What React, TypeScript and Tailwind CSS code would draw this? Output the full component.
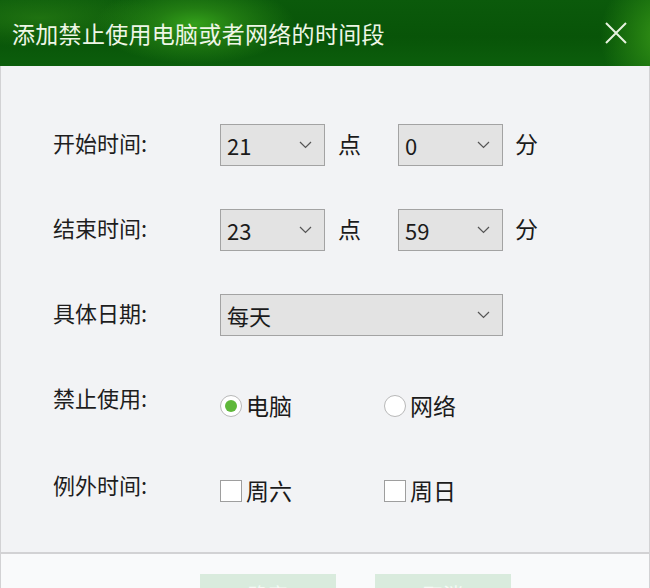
import { ReactNode } from 'react';

const FONT = "font-['Microsoft_YaHei','Noto_Sans_CJK_SC','Noto_Sans',sans-serif]";

function Chevron() {
  return (
    <svg width="13" height="8" viewBox="0 0 13 8" fill="none" className="shrink-0">
      <path d="M1 1l5.5 5.5L12 1" stroke="#555" strokeWidth="1.2" />
    </svg>
  );
}

function Select({ value, width }: { value: string; width: string }) {
  return (
    <div
      className={`flex h-[42px] ${width} items-center justify-between border border-[#a3a3a3] bg-[#e3e3e3] pl-[6px] pr-[12px] text-[22px] text-[#1b1b1b]`}
    >
      <span>{value}</span>
      <Chevron />
    </div>
  );
}

function Row({ label, children, labelClass = 'mb-[6px]' }: { label: string; children: ReactNode; labelClass?: string }) {
  return (
    <div className="flex h-[42px] items-center">
      <div className={`w-[219px] shrink-0 pl-[52px] text-[22px] text-[#1e1e1e] ${labelClass}`}>{label}</div>
      {children}
    </div>
  );
}

function Radio({ checked, label }: { checked?: boolean; label: string }) {
  return (
    <div className="flex items-center gap-[4px]">
      <span className="flex size-[22px] items-center justify-center rounded-full border border-[#b8b8b8] bg-white">
        {checked && <span className="size-[12px] rounded-full bg-[#5fb83a]" />}
      </span>
      <span className="mb-[2px] text-[23px] text-[#1b1b1b]">{label}</span>
    </div>
  );
}

function Checkbox({ label }: { label: string }) {
  return (
    <div className="flex items-center gap-[4px]">
      <span className="size-[22px] border border-[#9e9e9e] bg-white" />
      <span className="mb-[2px] text-[23px] text-[#1b1b1b]">{label}</span>
    </div>
  );
}

export default function App() {
  return (
    <div className={`flex h-[588px] w-[650px] flex-col overflow-hidden ${FONT}`}>
      <div className="flex h-[66px] shrink-0 items-center justify-between bg-[radial-gradient(ellipse_100px_40px_at_195px_24px,rgba(52,160,26,1)_0%,rgba(44,140,22,0.7)_40%,rgba(0,0,0,0)_100%),radial-gradient(ellipse_70px_70px_at_670px_36px,#3a9a1a_0%,rgba(45,140,20,0.7)_45%,rgba(0,0,0,0)_100%),radial-gradient(ellipse_120px_30px_at_40px_18px,rgba(40,125,20,0.7)_0%,rgba(0,0,0,0)_100%),linear-gradient(180deg,#0b5a0b_0%,#085408_55%,#0c5e0c_100%)] pl-[12px] pr-[22px]">
        <span className="text-[23px] tracking-[0.3px] text-[#eef6e6]">添加禁止使用电脑或者网络的时间段</span>
        <svg width="24" height="24" viewBox="0 0 24 24" fill="none">
          <path d="M2 2l20 20M22 2L2 22" stroke="#e8f2e0" strokeWidth="2" />
        </svg>
      </div>

      <div className="flex h-[488px] shrink-0 flex-col gap-[43px] border-x border-b-2 border-[#d2d2d4] bg-[#f2f3f5] pt-[58px]">
        <Row label="开始时间:">
          <Select value="21" width="w-[105px]" />
          <span className="mb-[4px] ml-[13px] w-[60px] text-[23px] text-[#1b1b1b]">点</span>
          <Select value="0" width="w-[105px]" />
          <span className="mb-[4px] ml-[12px] text-[23px] text-[#1b1b1b]">分</span>
        </Row>
        <Row label="结束时间:">
          <Select value="23" width="w-[105px]" />
          <span className="mb-[4px] ml-[13px] w-[60px] text-[23px] text-[#1b1b1b]">点</span>
          <Select value="59" width="w-[105px]" />
          <span className="mb-[4px] ml-[12px] text-[23px] text-[#1b1b1b]">分</span>
        </Row>
        <Row label="具体日期:">
          <Select value="每天" width="w-[283px]" />
        </Row>
        <div className="mt-[6px]">
          <Row label="禁止使用:" labelClass="mb-[18px]">
            <div className="w-[164px]">
              <Radio checked label="电脑" />
            </div>
            <Radio label="网络" />
          </Row>
        </div>
        <Row label="例外时间:" labelClass="mb-[14px]">
          <div className="w-[164px]">
            <Checkbox label="周六" />
          </div>
          <Checkbox label="周日" />
        </Row>
      </div>

      <div className="flex flex-1 gap-[39px] border-x border-[#d2d2d4] bg-[#f9fafb] pl-[199px] pt-[20px]">
        <div className="flex h-[42px] w-[136px] items-center justify-center bg-[#d9ebdd] text-[20px] text-[#f4faf5]">确定</div>
        <div className="flex h-[42px] w-[136px] items-center justify-center bg-[#d9ebdd] text-[20px] text-[#f4faf5]">取消</div>
      </div>
    </div>
  );
}
